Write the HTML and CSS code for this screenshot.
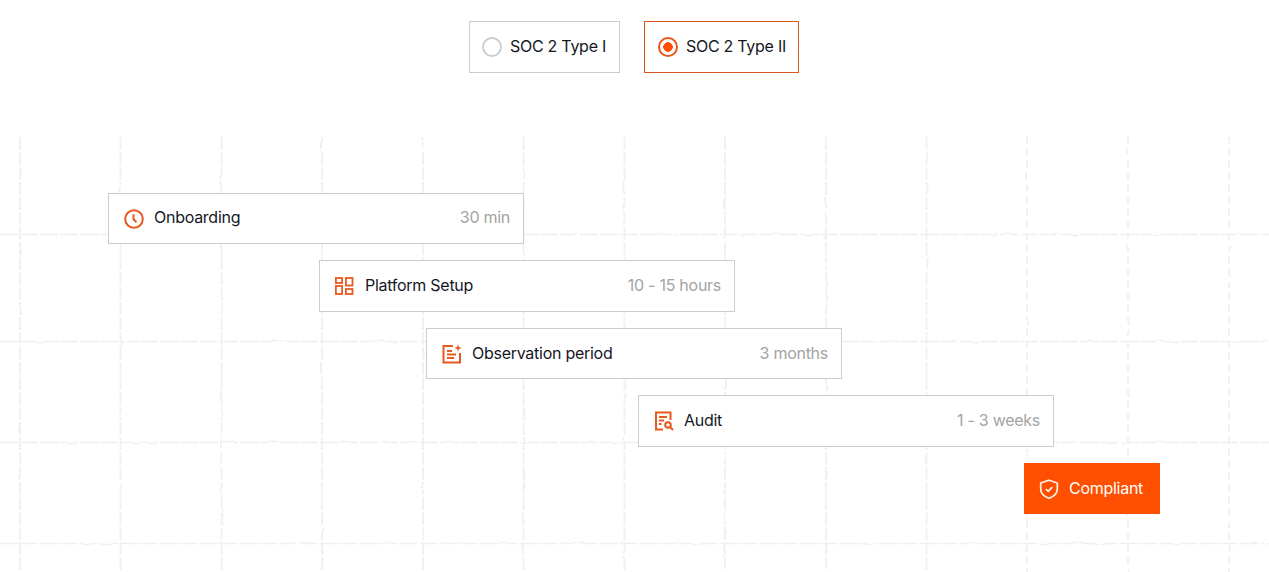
FILE: index.html
```html
<!DOCTYPE html>
<html lang="en">
<head>
<meta charset="utf-8">
<title>SOC 2 timeline</title>
<link rel="stylesheet" href="styles.css">
</head>
<body>
<main class="page">
  <div class="tabs">
    <label class="tab">
      <span class="radio"></span>
      <span class="label">SOC 2 Type I</span>
    </label>
    <label class="tab tab-active">
      <span class="radio radio-on"></span>
      <span class="label">SOC 2 Type II</span>
    </label>
  </div>

  <section class="chart">
    <svg class="grid" width="1269" height="435" viewBox="0 0 1269 435" aria-hidden="true">
      <defs>
        <filter id="rough" x="0" y="0" width="100%" height="100%" filterUnits="objectBoundingBox">
          <feTurbulence type="fractalNoise" baseFrequency="0.06" numOctaves="2" seed="4"/>
          <feDisplacementMap in="SourceGraphic" scale="2.500"/>
        </filter>
      </defs>
      <g filter="url(#rough)">
        <g class="grid-h">
          <path d="M0 97.500H1269"/><path d="M0 204.500H1269"/><path d="M0 305.500H1269"/><path d="M0 406.500H1269"/>
        </g>
        <g class="grid-v">
          <path d="M20 0V435"/><path d="M120.500 0V435"/><path d="M221.500 0V435"/><path d="M322 0V435"/>
          <path d="M423 0V435"/><path d="M523.500 0V435"/><path d="M624.500 0V435"/><path d="M725 0V435"/>
          <path d="M826 0V435"/><path d="M926.500 0V435"/>
        </g>
        <g class="grid-v grid-v-short">
          <path d="M1027 0V435"/><path d="M1128 0V435"/><path d="M1229 0V435"/>
        </g>
      </g>
    </svg>

    <div class="rows">
      <div class="bar bar-1">
        <svg class="icon" viewBox="0 0 20 20"><circle cx="10" cy="10" r="8.800"/><path d="M9.500 5.200V10.300L12.500 13.200"/></svg>
        <span class="name">Onboarding</span>
        <span class="time">30 min</span>
      </div>
      <div class="bar bar-2">
        <svg class="icon icon-thin" viewBox="0 0 20 20"><rect x="0.900" y="2" width="6.200" height="5"/><rect x="10.900" y="2" width="6.600" height="7.500"/><rect x="0.900" y="10" width="6.200" height="8"/><rect x="10.900" y="13" width="6.600" height="5"/></svg>
        <span class="name">Platform Setup</span>
        <span class="time">10 - 15 hours</span>
      </div>
      <div class="bar bar-3">
        <svg class="icon" viewBox="0 0 20 20"><path d="M11 2H1.500V18.500H18V9"/><path d="M5 7H10M5 10.500H14M5 14H12"/><path class="solid" d="M16 .5L17 3L19.500 4L17 5L16 7.500L15 5L12.500 4L15 3Z"/></svg>
        <span class="name">Observation period</span>
        <span class="time">3 months</span>
      </div>
      <div class="bar bar-4">
        <svg class="icon" viewBox="0 0 20 20"><path d="M9 18.500H2V1.500H16.500V9"/><path d="M5 6H13M5 9.500H10M5 13H7.500"/><circle cx="14" cy="14" r="2.800"/><path d="M16 16L19 19"/></svg>
        <span class="name">Audit</span>
        <span class="time">1 - 3 weeks</span>
      </div>
      <div class="bar-done">
        <svg class="icon icon-light" viewBox="0 0 20 20"><path d="M10 1.200L18.300 4V10C18.300 14.500 14.800 17.500 10 19.300C5.200 17.500 1.700 14.500 1.700 10V4Z"/><path d="M6.800 10L9.200 12.300L13.300 8.200"/></svg>
        <span class="name">Compliant</span>
      </div>
    </div>
  </section>
</main>
</body>
</html>
```
FILE: styles.css
```css
* { box-sizing: border-box; }

html, body {
  margin: 0;
  height: 100%;
  background: #fff;
}

.page {
  height: 572px;
  overflow: hidden;
  font-family: "Inter", "Liberation Sans", sans-serif;
  font-size: 16px;
  letter-spacing: -0.27px;
  color: #14171f;
}

.tabs {
  display: flex;
  justify-content: center;
  gap: 24px;
  height: 137px;
  padding: 21px 0 0 0;
  margin-left: -1px;
}

.tab {
  display: flex;
  align-items: center;
  gap: 8px;
  height: 52px;
  padding: 0 13px 0 12px;
  border: 1px solid #cccccc;
}

.tab-active {
  border-color: #d9571f;
  width: 155px;
  padding: 0 0 0 13px;
}

.label {
  padding-bottom: 2px;
}

.radio {
  flex: none;
  width: 20px;
  height: 20px;
  border: 2px solid #cccccc;
  border-radius: 50%;
}

.radio-on {
  border-color: #e8541a;
  background: radial-gradient(circle, #ff4f00 0 4.500px, #fff 5px);
}

.chart {
  position: relative;
  height: 435px;
}

.grid {
  position: absolute;
  left: 0;
  top: 0;
  fill: none;
}

.grid-h path {
  stroke: #f0f0f0;
  stroke-width: 1.500;
  stroke-dasharray: 18 2;
}

.grid-v path {
  stroke: #f0f0f0;
  stroke-width: 1.800;
  stroke-dasharray: 13 2;
}

.grid-v-short path {
  stroke-dasharray: 7 5;
}

.rows {
  position: relative;
  display: flex;
  flex-direction: column;
  gap: 16px;
  padding-top: 55.900px;
}

.bar {
  display: flex;
  align-items: center;
  width: 416px;
  height: 51.500px;
  padding: 0 13px 0 15px;
  background: #fff;
  border: 1px solid #cccccc;
}

.bar-1 { margin-left: 108px; }
.bar-2 { margin-left: 319px; }
.bar-3 { margin-left: 426px; }
.bar-4 { margin-left: 638px; }

.icon {
  flex: none;
  width: 20px;
  height: 20px;
  margin-right: 10px;
  fill: none;
  stroke: #e8591f;
  stroke-width: 2;
}

.icon-thin {
  stroke-width: 1.800;
}

.icon .solid {
  fill: #e8591f;
  stroke: none;
}

.icon-light {
  stroke: #fff3ec;
  stroke-width: 1.700;
}

.name {
  flex: 1;
  padding-bottom: 2px;
}

.time {
  padding-bottom: 2px;
  color: #a3a3a3;
}

.bar-1 .name,
.bar-1 .time {
  padding-bottom: 4px;
}

.bar-done {
  display: flex;
  align-items: center;
  width: 136px;
  height: 51.500px;
  margin-left: 1024px;
  padding-left: 15px;
  background: #ff4f00;
  color: #fff;
}
```
